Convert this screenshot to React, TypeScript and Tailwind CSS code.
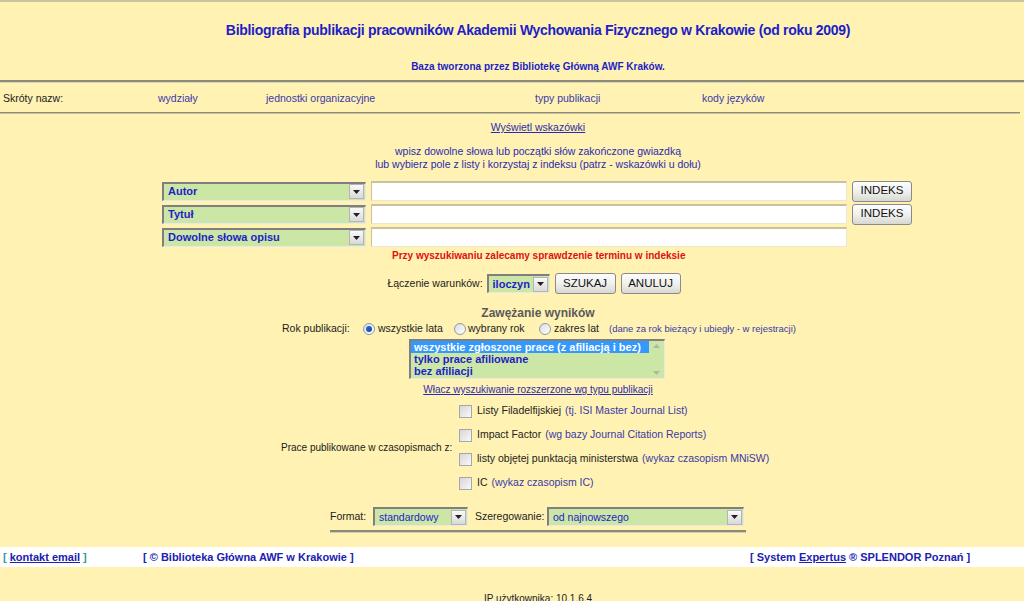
import React from "react";

const Arrow = () => (
  <span className="flex h-[15px] w-[15px] items-center justify-center border border-[#b5b5b5] bg-gradient-to-b from-[#fafafa] to-[#d9d9d9]">
    <svg width="7" height="4" viewBox="0 0 7 4"><path d="M0 0H7L3.5 4Z" fill="#222" /></svg>
  </span>
);

function Select({ label, w, bold = true }: { label: string; w: string; bold?: boolean }) {
  return (
    <div className={`flex h-[19px] shrink-0 items-center justify-between border-t-2 border-l-2 border-t-[#7f7f7f] border-l-[#7f7f7f] border-r border-b border-r-[#e8e8e8] border-b-[#e8e8e8] bg-[#cbe6a5] pl-[4px] pr-[1px] ${w}`}>
      <span className={`${bold ? "font-bold text-[11px]" : "text-[10.5px]"} text-[#1e1ec8] leading-none`}>{label}</span>
      <Arrow />
    </div>
  );
}

const Btn = ({ children, w }: { children: React.ReactNode; w: string }) => (
  <button className={`h-[21px] shrink-0 ${w} rounded-[3px] border border-[#8a8a8a] bg-gradient-to-b from-[#fdfdfd] via-[#f0f0ee] to-[#d8d8d2] text-[11.5px] leading-none text-[#111]`}>
    {children}
  </button>
);

const Radio = ({ on }: { on?: boolean }) => (
  <span className="inline-flex h-[12px] w-[12px] shrink-0 items-center justify-center rounded-full border border-[#8d9aab] bg-gradient-to-br from-[#dcdcdc] to-[#ffffff]">
    {on && <span className="h-[6px] w-[6px] rounded-full bg-gradient-to-br from-[#2a6fd6] to-[#1345a5]" />}
  </span>
);

const Check = () => (
  <span className="inline-block h-[13px] w-[13px] shrink-0 border border-[#a7a7a7] bg-gradient-to-br from-[#d6d6d6] to-[#fafafa]" />
);

const Center = ({ className = "", children }: { className?: string; children: React.ReactNode }) => (
  <div className={`w-[1076px] text-center ${className}`}>{children}</div>
);

export default function App() {
  return (
    <div className="h-[601px] w-[1024px] overflow-hidden bg-[#fff2b3] font-['Liberation_Sans',Arial,sans-serif] text-[11px] text-[#222]">
      <div className="h-[2px] bg-[#c8c4a0]" />
      {/* title */}
      <Center className="pt-[19px] text-[14px] font-bold leading-[18px] tracking-[-0.3px] text-[#1e1ec8]">
        Bibliografia publikacji pracowników Akademii Wychowania Fizycznego w Krakowie (od roku 2009)
      </Center>
      <Center className="pt-[22px] text-[10px] font-bold leading-[12px] text-[#1e1ec8]">
        Baza tworzona przez Bibliotekę Główną AWF Kraków.
      </Center>
      <div className="mt-[7px] h-[3px] border-t-2 border-[#8a8a7a] bg-[#d8d4b0]" />
      {/* nav */}
      <div className="grid h-[29px] grid-cols-[155px_108px_269px_167px_1fr] items-center pt-[2px] text-[10.5px]">
        <span className="pl-[3px] text-[#222]">Skróty nazw:</span>
        <span className="pl-[3px] text-[#3a3aa8]">wydziały</span>
        <span className="pl-[3px] text-[#3a3aa8]">jednostki organizacyjne</span>
        <span className="pl-[3px] text-[#3a3aa8]">typy publikacji</span>
        <span className="pl-[3px] text-[#3a3aa8]">kody języków</span>
      </div>
      <div className="mr-[4px] h-[2px] border-t border-[#8a8a7a] bg-[#c8c4a0]" />
      {/* hints */}
      <Center className="pt-[7px] text-[10.5px] leading-[13px]">
        <span className="text-[#2b2bb0] underline">Wyświetl wskazówki</span>
      </Center>
      <Center className="pt-[11px] text-[10.5px] leading-[13px] text-[#2b2bb0]">
        <div>wpisz dowolne słowa lub początki słów zakończone gwiazdką</div>
        <div>lub wybierz pole z listy i korzystaj z indeksu (patrz - wskazówki u dołu)</div>
      </Center>
      {/* search rows */}
      <div className="flex flex-col gap-[3px] pt-[10px] pl-[162px]">
        {[
          { l: "Autor", b: true },
          { l: "Tytuł", b: true },
          { l: "Dowolne słowa opisu", b: false },
        ].map((r) => (
          <div key={r.l} className="flex h-[20px] items-center">
            <Select label={r.l} w="w-[204px]" />
            <div className="ml-[5px] h-[20px] w-[476px] border-t-2 border-l border-[#c8c2a0] border-r border-b border-r-[#ece8d0] border-b-[#ece8d0] bg-white" />
            {r.b && (
              <div className="ml-[5px]">
                <Btn w="w-[60px]">INDEKS</Btn>
              </div>
            )}
          </div>
        ))}
      </div>
      <div className="pt-[2px] pl-[392px] text-[10px] font-bold leading-[13px] text-[#e01010]">
        Przy wyszukiwaniu zalecamy sprawdzenie terminu w indeksie
      </div>
      {/* combine */}
      <div className="flex w-[1076px] items-center justify-center gap-[5px] pt-[11px] pr-[8px]">
        <span className="mr-[-1px] text-[10.5px]">Łączenie warunków:</span>
        <Select label="iloczyn" w="w-[63px]" />
        <Btn w="w-[61px]">SZUKAJ</Btn>
        <Btn w="w-[60px]">ANULUJ</Btn>
      </div>
      <Center className="pt-[12px] text-[12px] font-bold leading-[15px] text-[#5a5a5a]">Zawężanie wyników</Center>
      {/* radio row */}
      <div className="flex h-[16px] items-center pl-[282px] text-[10.5px]">
        <span className="w-[81px]">Rok publikacji:</span>
        <Radio on />
        <span className="ml-[3px] w-[76px]">wszystkie lata</span>
        <Radio />
        <span className="ml-[2px] w-[71px]">wybrany rok</span>
        <Radio />
        <span className="ml-[3px] w-[55px]">zakres lat</span>
        <span className="text-[9.5px] text-[#3a3aa8]">(dane za rok bieżący i ubiegły - w rejestracji)</span>
      </div>
      {/* listbox */}
      <div className="ml-[409px] mt-[2px] flex h-[40px] w-[256px] border-t-2 border-l-2 border-t-[#7f7f7f] border-l-[#7f7f7f] border-r border-b border-[#e8e8e8] bg-[#cbe6a5]">
        <div className="flex-1 text-[11px] font-bold leading-[12px] text-[#1e1ec8]">
          <div className="bg-[#3399ff] pl-[3px] text-white">wszystkie zgłoszone prace (z afiliacją i bez)</div>
          <div className="pl-[3px]">tylko prace afiliowane</div>
          <div className="pl-[3px]">bez afiliacji</div>
        </div>
        <div className="flex w-[15px] flex-col items-center justify-between bg-[#cbe6a5] py-[3px]">
          <svg width="7" height="4" viewBox="0 0 7 4"><path d="M0 4H7L3.5 0Z" fill="#b0b8a0" /></svg>
          <svg width="7" height="4" viewBox="0 0 7 4"><path d="M0 0H7L3.5 4Z" fill="#b0b8a0" /></svg>
        </div>
      </div>
      <Center className="pt-[4px] text-[10px] leading-[13px]">
        <span className="text-[#2b2bb0] underline">Włacz wyszukiwanie rozszerzone wg typu publikacji</span>
      </Center>
      {/* checkboxes */}
      <div className="flex items-center pl-[281px] pt-[3px]">
        <span className="w-[178px] whitespace-nowrap text-[10px]">Prace publikowane w czasopismach z:</span>
        <div className="flex flex-col text-[10.5px]">
          {[
            ["Listy Filadelfijskiej", "(tj. ISI Master Journal List)"],
            ["Impact Factor", "(wg bazy Journal Citation Reports)"],
            ["listy objętej punktacją ministerstwa", "(wykaz czasopism MNiSW)"],
            ["IC", "(wykaz czasopism IC)"],
          ].map(([a, b]) => (
            <div key={a} className="flex h-[24px] items-center whitespace-nowrap">
              <Check />
              <span className="ml-[5px]">{a}</span>
              <span className="ml-[4px] text-[#3a3aa8]">{b}</span>
            </div>
          ))}
        </div>
      </div>
      {/* format */}
      <div className="flex items-center pl-[330px] pt-[12px] text-[10.5px]">
        <span className="w-[43px]">Format:</span>
        <Select label="standardowy" w="w-[95px]" bold={false} />
        <span className="ml-[7px] w-[72px]">Szeregowanie:</span>
        <Select label="od najnowszego" w="w-[197px]" bold={false} />
      </div>
      <div className="ml-[330px] mt-[4px] h-[3px] w-[416px] border-t-2 border-[#8a8a7a] bg-[#d0ccb0]" />
      {/* footer */}
      <div className="mt-[14px] flex h-[20px] items-center bg-white text-[11px] font-bold">
        <span className="w-[143px] pl-[3px] text-[#2f9a9a]">
          [ <span className="text-[#2020b0] underline">kontakt email</span> ]
        </span>
        <span className="w-[607px] text-[#2020b0]">[ © Biblioteka Główna AWF w Krakowie ]</span>
        <span className="text-[#2020b0]">
          [ System <span className="underline">Expertus</span> ® SPLENDOR Poznań ]
        </span>
      </div>
      <Center className="pt-[26px] text-[10px] leading-[12px]">IP użytkownika: 10.1.6.4</Center>
    </div>
  );
}
